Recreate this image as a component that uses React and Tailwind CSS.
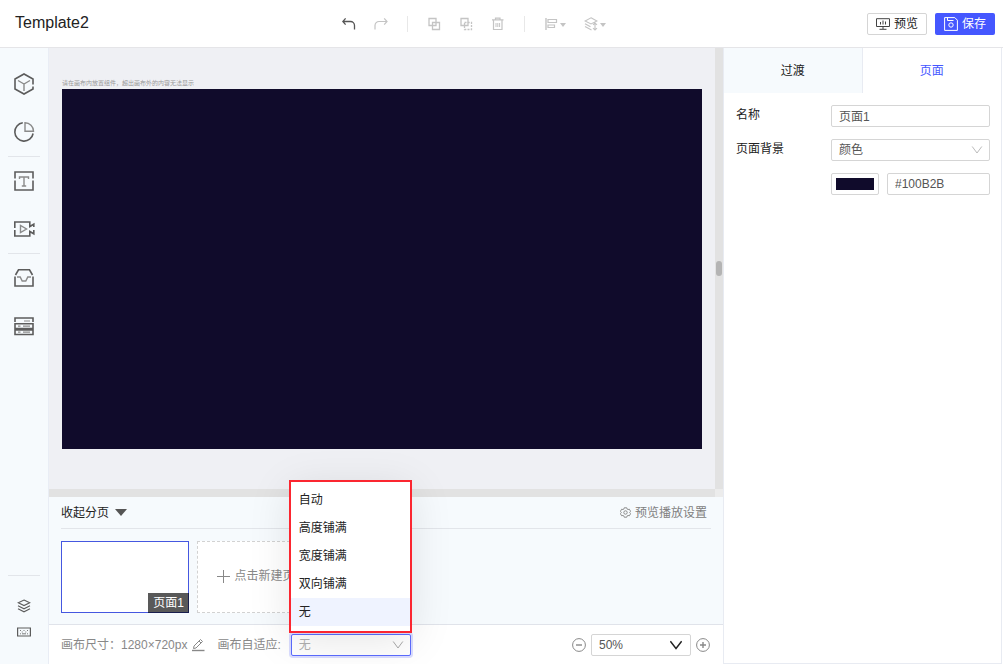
import { useState } from "react";

const FIT_OPTIONS = ["自动", "高度铺满", "宽度铺满", "双向铺满", "无"];

const Svg = ({ w = 14, h = 14, box, sw = 1, className = "", children }) => (
  <svg width={w} height={h} viewBox={box || `0 0 ${w} ${h}`} fill="none" stroke="currentColor" strokeWidth={sw} className={`shrink-0 ${className}`} aria-hidden="true">
    {children}
  </svg>
);

const UndoIcon = () => <Svg sw={1.3}><path d="M3.6 1.4.8 4.5l2.8 3.100M.8 4.500h7.700a4 4 0 0 1 4 4v4" /></Svg>;
const RedoIcon = () => <Svg sw={1.2}><path d="M10.200 1.400 13 4.500l-2.800 3.100M13 4.500H5a4 4 0 0 0-4 4v4" /></Svg>;
const CopyIcon = () => <Svg sw={1.3}><path d="M2 1.500h7v7H2zM5.500 5.500h7v7h-7z" /></Svg>;
const CutIcon = () => (
  <Svg sw={1.3}><path d="M2 1.500h7v7H2z" /><path d="M5.500 5.500h7v7h-7z" strokeDasharray="2 1.200" /></Svg>
);
const TrashIcon = () => (
  <Svg sw={1.2}><path d="M1 2.800h11.500M4.500 2.500V1.200H9v1.300M2.500 3v9.500h8.500V3" /><path d="M5 6v4M6.800 6v4M8.600 6v4" strokeWidth="1" /></Svg>
);

const CaretSmall = () => <Svg w={6} h={4} className="mt-0.5"><path d="M0 0h6L3 4z" fill="currentColor" stroke="none" /></Svg>;

const AlignIcon = () => (
  <Svg><path d="M2 1v12" strokeWidth="1.400" /><path d="M4 2.500h8.500v3H4zM4 8h6.500v2.500H4z" strokeWidth="1.200" /></Svg>
);

const OrderIcon = () => (
  <Svg sw={1.1}><path d="M7 .8 13 4 7 7 1 4zM1 6.800 6.500 9.800M1 9.600 7.500 13M11 6v7M9 7.800 11 6l2 1.800M9 11.200 11 13l2-1.800" /></Svg>
);

const CubeIcon = () => (
  <Svg w={22} h={22} sw={1.6}>
    <path d="M20 13.500V16L11 21 2 16V6L11 1l9 5v5.500" />
    <path d="M5 7.500 11 11l6-3.500M11 11v7" stroke="#8a8a8a" strokeWidth="1.400" />
  </Svg>
);
const PieIcon = () => (
  <Svg w={22} h={22} sw={1.6}>
    <path d="M9.800 1.800a9.200 9.200 0 1 0 10.300 10.700" />
    <path d="M12 1.700V10.200h8.500A8.500 8.500 0 0 0 12 1.700z" stroke="#8a8a8a" strokeWidth="1.400" />
  </Svg>
);
const TextIcon = () => (
  <Svg w={22} h={22} sw={1.6}>
    <path d="M2 8.500V2h18v6.500M2 10.500v9.500h18v-9.500" />
    <path d="M6.500 9V7h9v2M11 7v9M8.800 16h4.400" stroke="#8a8a8a" strokeWidth="1.400" />
  </Svg>
);
const VideoIcon = () => (
  <Svg w={22} h={22} sw={1.6}>
    <path d="M1.800 10V4h15v4.500l4-2.300V9M1.800 12v6h15v-4.500l4 2.300V12" />
    <path d="M7.500 7.500v7l6-3.500z" stroke="#8a8a8a" strokeWidth="1.400" />
  </Svg>
);
const InboxIcon = () => (
  <Svg w={22} h={22} sw={1.6}>
    <path d="M2.500 8 5.500 2.800h11L19.500 8M2 9.500V19h18V9.500" />
    <path d="M4 10h3.200l2 4h3.600l2-4H18" stroke="#8a8a8a" strokeWidth="1.400" />
  </Svg>
);
const ServerIcon = () => (
  <Svg w={22} h={22} sw={1.6}>
    <path d="M2 7V3h18v4M2 8.800h18v4.800H2zM2 15h18v4.500H2z" />
    <path d="M11 6h6M5 11.200h2.500M10 11.200h7M5 17.200h2.500M10 17.200h7" stroke="#8a8a8a" strokeWidth="1.200" />
  </Svg>
);
const StackIcon = () => (
  <Svg sw={1.1}><path d="M7 1 12.700 3.800 7 6.600 1.300 3.800zM1 6.800l6 3 6-3M1 9.800l6 3 6-3" /></Svg>
);
const KeyboardIcon = () => (
  <Svg h={10}>
    <path d="M.6 1h12.800v8H.6z" strokeWidth="1.200" />
    <path d="M3 3.500h1M6.500 3.500h1M10 3.500h1M4.700 5h1M8.300 5h1M3 6.800h1M5 6.800h4M10 6.800h1" strokeWidth=".8" />
  </Svg>
);

const PreviewIcon = () => (
  <Svg w={14} h={12} className="text-[#444]"><path d="M.5.700h13v7.800H.5zM7 8.500v2.500M3.500 11.300h7M4.500 4V6.500M7 2.500v4M9.500 3.500V6.500" /></Svg>
);
const SaveIcon = () => (
  <Svg><path d="M.6.600h10.200l2.600 2.600v10.200H.6zM3.500.700v2.800h6M7 5.800a2.200 2.200 0 1 0 0 4.400 2.200 2.200 0 1 0 0-4.400z" /></Svg>
);
const GearIcon = () => (
  <Svg w={11} h={11} box="0 0 14 14" sw={1.1}>
    <path d="M5.400 1h3.200l.5 1.700 1.100.6 1.700-.5 1.600 2.700L12.300 7l1.200 1.500-1.600 2.700-1.700-.5-1.100.6-.5 1.700H5.400l-.5-1.700-1.100-.6-1.700.5L.5 8.500 1.700 7 .5 5.500l1.600-2.700 1.700.5 1.100-.6z" />
    <circle cx="7" cy="7" r="2.200" />
  </Svg>
);
const EditIcon = () => (
  <Svg>
    <path d="M2.500 10.500 3 8l6.500-6.500 2 2L5 10zM8 3l2 2" sw={1.2} />
    <path d="M1 12.500h12.500" strokeWidth="1.400" />
  </Svg>
);
const Chevron = ({ big, className = "" }) => (
  <Svg w={12} h={12} sw={big ? 1.4 : 1} className={`pointer-events-none absolute top-1/2 -translate-y-1/2 ${className}`}>
    <path d={big ? "M.4 2.300 6 9.500l5.600-7.200" : "M1.200 2.500 6 9l4.800-6.500"} />
  </Svg>
);
const RoundIcon = ({ plus }) => (
  <Svg><circle cx="7" cy="7" r="6.400" /><path d={plus ? "M4 7h6M7 4v6" : "M4 7h6"} strokeWidth="1.400" /></Svg>
);

const NAV = [
  [{ label: "组件", Icon: CubeIcon }, { label: "图表", Icon: PieIcon }],
  [{ label: "文本", Icon: TextIcon }, { label: "媒体", Icon: VideoIcon }],
  [{ label: "素材", Icon: InboxIcon }, { label: "数据", Icon: ServerIcon }],
];

const FIELD = "h-[22px] w-full min-w-0 appearance-none rounded-xs border border-[#d5d5d5] bg-white px-[7px] text-xs text-[#555] outline-none";

function IconButton({ label, className = "", children }) {
  return (
    <button type="button" aria-label={label} className={`flex shrink-0 items-center justify-center ${className}`}>
      {children}
    </button>
  );
}

function Header() {
  return (
    <header className="flex h-12 shrink-0 items-center border-b border-[#e5e5e8] bg-white pt-px pr-2 pl-[15px]">
      <h1 className="w-1/3 pb-0.5 text-base text-[#222]">Template2</h1>
      <div className="flex items-center gap-[18px] text-[#c4c4c4]">
        <IconButton label="撤销" className="text-[#555]"><UndoIcon /></IconButton>
        <IconButton label="重做"><RedoIcon /></IconButton>
        <span className="mx-px h-4 w-px bg-[#e8e8e8]" />
        <IconButton label="复制"><CopyIcon /></IconButton>
        <IconButton label="剪切"><CutIcon /></IconButton>
        <IconButton label="删除"><TrashIcon /></IconButton>
        <span className="mx-px h-4 w-px bg-[#e8e8e8]" />
        <IconButton label="对齐" className="gap-0.5"><AlignIcon /><CaretSmall /></IconButton>
        <IconButton label="层级" className="gap-0.5"><OrderIcon /><CaretSmall /></IconButton>
      </div>
      <div className="ml-auto flex gap-2 text-xs">
        <button type="button" className="flex h-[22px] w-[60px] items-center justify-center gap-1 rounded-xs border border-[#d5d5d5] text-[#222]">
          <PreviewIcon />预览
        </button>
        <button type="button" className="flex h-[22px] w-[60px] items-center justify-center gap-1 rounded-xs bg-[#4557ff] text-white">
          <SaveIcon />保存
        </button>
      </div>
    </header>
  );
}

function Sidebar() {
  return (
    <nav className="flex w-[49px] shrink-0 flex-col items-center border-r border-[#e9edf5] bg-[#f6fafd] pt-3 text-[#5c5c5c]">
      {NAV.map((group, i) => (
        <div key={i} className="flex w-8 flex-col items-center gap-7 border-b border-[#e2e5ea] py-3.5 nth-3:border-transparent">
          {group.map(({ label, Icon }) => (
            <IconButton key={label} label={label} className="h-5"><Icon /></IconButton>
          ))}
        </div>
      ))}
      <div className="mt-auto flex w-8 flex-col items-center gap-[14px] border-t border-[#e2e5ea] pt-[23px] pb-[27px]">
        <IconButton label="图层"><StackIcon /></IconButton>
        <IconButton label="快捷键"><KeyboardIcon /></IconButton>
      </div>
    </nav>
  );
}

function Stage() {
  return (
    <div className="grid min-h-0 flex-1 grid-cols-[1fr_8px] grid-rows-[1fr_8px]">
      <div className="overflow-hidden bg-[#eff0f4] pt-[29px] pl-[13px]">
        <p className="h-3 text-[6px] leading-3 whitespace-nowrap text-[#999]">请在画布内放置组件，超出画布外的内容无法显示</p>
        <div className="aspect-video w-[640px] bg-[#100b2b]" />
      </div>
      <div className="flex items-center justify-center bg-[#e2e2e2]">
        <span className="h-[15px] w-1.5 rounded-full bg-[#b4b4b4]" />
      </div>
      <div className="bg-[#e2e2e2]" />
      <div className="bg-[#ececec]" />
    </div>
  );
}

function Pages() {
  return (
    <section className="shrink-0 border-b border-[#e0e3ea] bg-[#f6fafd] px-3 pb-[11px] text-xs">
      <div className="flex h-8 items-center justify-between border-b border-[#e2e5ea]">
        <button type="button" className="flex items-center gap-1.5 text-[#222]">
          收起分页
          <Svg w={12} h={7}><path d="M0 0h12L6 7z" fill="#555" stroke="none" /></Svg>
        </button>
        <button type="button" className="mr-1 flex items-center gap-1 text-[#808080]"><GearIcon />预览播放设置</button>
      </div>
      <div className="flex gap-2 pt-3">
        <button type="button" className="relative h-[72px] w-32 border border-[#4557e0] bg-white">
          <span className="absolute -right-px -bottom-px h-5 bg-black/65 px-[5px] leading-5 text-white">页面1</span>
        </button>
        <button type="button" className="flex h-[72px] w-32 items-center justify-center gap-1 border border-dashed border-[#d2d2d2] bg-white pb-0.5 pl-0.5 text-[#888]">
          <Svg w={13} h={13}><path d="M6.500 0v13M0 6.500h13" /></Svg>
          点击新建页面
        </button>
      </div>
    </section>
  );
}

function FitSelect() {
  const [fit, setFit] = useState("无");
  return (
    <div className="relative ml-[10px] w-[120px]">
      <select id="fit" value={fit} onChange={(e) => setFit(e.target.value)} className="block h-[22px] w-full appearance-none rounded-xs border border-[#5c6cff] bg-white px-[7px] text-xs text-[#b0b0b0] ring-2 ring-[#4557ff]/20 outline-none">
        {FIT_OPTIONS.map((o) => <option key={o}>{o}</option>)}
      </select>
      <Chevron className="right-[7px] text-[#aaa]" />
      <ul role="listbox" aria-label="画布自适应" className="absolute bottom-full -left-0.5 mb-px w-[123px] border-2 border-[#fb2630] bg-white pt-1 pb-[5px] text-[#222] shadow-[0_8px_40px_rgba(0,0,0,0.1)]">
        {FIT_OPTIONS.map((o) => (
          <li key={o} role="option" aria-selected={o === fit} onClick={() => setFit(o)} className={`h-7 px-2 leading-7 ${o === fit ? "bg-[#eff3ff]" : ""}`}>
            {o}
          </li>
        ))}
      </ul>
    </div>
  );
}

function Footer() {
  return (
    <footer className="flex h-[39px] shrink-0 items-center bg-white pr-[13px] pl-3 text-xs text-[#888]">
      <span>画布尺寸：1280×720px</span>
      <IconButton label="编辑尺寸" className="ml-1"><EditIcon /></IconButton>
      <label htmlFor="fit" className="ml-3">画布自适应:</label>
      <FitSelect />
      <div className="ml-auto flex items-center gap-[5px]">
        <IconButton label="缩小"><RoundIcon /></IconButton>
        <div className="relative w-[100px]">
          <select aria-label="缩放" defaultValue="50%" className={`block ${FIELD}`}>
            <option>50%</option>
            <option>100%</option>
          </select>
          <Chevron big className="right-[9px] text-[#222]" />
        </div>
        <IconButton label="放大"><RoundIcon plus /></IconButton>
      </div>
    </footer>
  );
}

function Inspector() {
  return (
    <aside className="mr-px flex w-[279px] shrink-0 flex-col border-x border-b border-[#e8ebf2] bg-white text-xs text-[#222]">
      <div role="tablist" className="grid h-[45px] grid-cols-2">
        <button type="button" role="tab" aria-selected="false" className="border-r border-[#e8ebf2] bg-[#f6fafd]">过渡</button>
        <button type="button" role="tab" aria-selected="true" className="text-[#4557ff]">页面</button>
      </div>
      <div className="grid grid-cols-[95px_1fr] gap-y-3 p-3 pr-[11px]">
        <label htmlFor="name" className="leading-5">名称</label>
        <input id="name" defaultValue="页面1" className={`pb-0.5 ${FIELD}`} />
        <label htmlFor="bg" className="leading-5">页面背景</label>
        <div className="relative">
          <select id="bg" className={FIELD}>
            <option>颜色</option>
            <option>图片</option>
          </select>
          <Chevron className="right-[7px] text-[#bbb]" />
        </div>
        <div className="col-start-2 flex gap-2">
          <input type="color" aria-label="背景颜色" defaultValue="#100b2b" className="h-[22px] w-12 shrink-0 appearance-none rounded-xs border border-[#d5d5d5] bg-white p-1 [&::-webkit-color-swatch]:rounded-none [&::-webkit-color-swatch]:border-0 [&::-webkit-color-swatch-wrapper]:p-0" />
          <input aria-label="颜色值" defaultValue="#100B2B" className={FIELD} />
        </div>
      </div>
    </aside>
  );
}

export default function App() {
  return (
    <div className="flex h-screen flex-col overflow-hidden bg-white font-['Liberation_Sans','Noto_Sans_CJK_SC',sans-serif]">
      <Header />
      <div className="flex min-h-0 flex-1">
        <Sidebar />
        <main className="flex min-w-0 flex-1 flex-col">
          <Stage />
          <Pages />
          <Footer />
        </main>
        <Inspector />
      </div>
    </div>
  );
}
